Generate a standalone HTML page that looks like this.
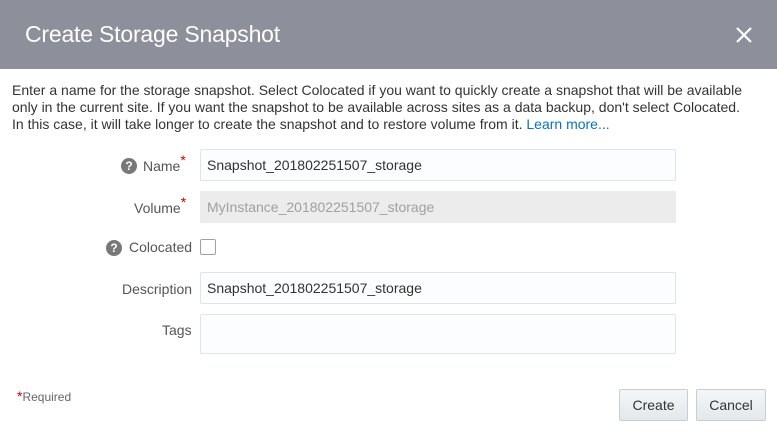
<!DOCTYPE html>
<html><head><style>
*{box-sizing:border-box;margin:0;padding:0}
body{width:777px;height:436px;background:#fff;font-family:"Liberation Sans",Arial,sans-serif;position:relative;overflow:hidden;color:#333}
.hdr{position:absolute;left:0;top:0;width:777px;height:69px;background:#8d8f9b}
.hdr h1{position:absolute;left:25px;top:21px;font-weight:normal;font-size:23px;color:#fff;letter-spacing:-0.2px}
.x{position:absolute;left:735px;top:26px;width:18px;height:18px}
.intro{position:absolute;left:12px;top:82px;width:770px;font-size:14px;line-height:17px;color:#333;white-space:nowrap}
.intro a{color:#0572ce;text-decoration:none}
.lbl{position:absolute;font-size:14px;color:#555;text-align:right}
.req{color:#c00;font-size:14px;position:relative;top:-6px}
.q{position:absolute;width:16px;height:16px;border-radius:50%;background:#787878;color:#fff;font-size:12px;font-weight:bold;text-align:center;line-height:16px}
.inp{position:absolute;left:200px;width:476px;height:32px;border:1px solid #dfe4e7;border-radius:2px;background:#fcfdfe;font-size:14px;padding:0 6px;line-height:30px;color:#333}
.dis{background:#ececec;border-color:#ececec;color:#a0a0a0}
.cb{position:absolute;left:200px;top:239px;width:16px;height:16px;border:1px solid #9da2a6;border-radius:2px;background:#fff}
.btn{position:absolute;top:389px;height:32px;border:1px solid #c4ced7;border-radius:2px;background:linear-gradient(#f4f6f8,#e4e8eb);font-size:14px;color:#333;text-align:center;line-height:30px}
</style></head><body>
<div class="hdr"><h1>Create Storage Snapshot</h1>
<svg class="x" viewBox="0 0 18 18"><path d="M2 2L16 16M16 2L2 16" stroke="#fff" stroke-width="2.2"/></svg></div>
<div class="intro">Enter a name for the storage snapshot. Select Colocated if you want to quickly create a snapshot that will be available<br>only in the current site. If you want the snapshot to be available across sites as a data backup, don't select Colocated.<br>In this case, it will take longer to create the snapshot and to restore volume from it. <a>Learn more...</a></div>

<div class="q" style="left:121px;top:158px">?</div>
<div class="lbl" style="left:143px;top:158px">Name<span class="req">*</span></div>
<div class="inp" style="top:149px">Snapshot_201802251507_storage</div>

<div class="lbl" style="left:134px;top:200px">Volume<span class="req">*</span></div>
<div class="inp dis" style="top:191px">MyInstance_201802251507_storage</div>

<div class="q" style="left:106px;top:240px">?</div>
<div class="lbl" style="left:129px;top:239px">Colocated</div>
<div class="cb"></div>

<div class="lbl" style="left:122px;top:281px">Description</div>
<div class="inp" style="top:272px">Snapshot_201802251507_storage</div>

<div class="lbl" style="left:162px;top:322px">Tags</div>
<div class="inp" style="top:314px;height:40px"></div>

<div style="position:absolute;left:17px;top:388px;font-size:12px;color:#666"><span style="color:#c00;font-size:14px">*</span>Required</div>
<div class="btn" style="left:619px;width:69px">Create</div>
<div class="btn" style="left:696px;width:70px">Cancel</div>
</body></html>
